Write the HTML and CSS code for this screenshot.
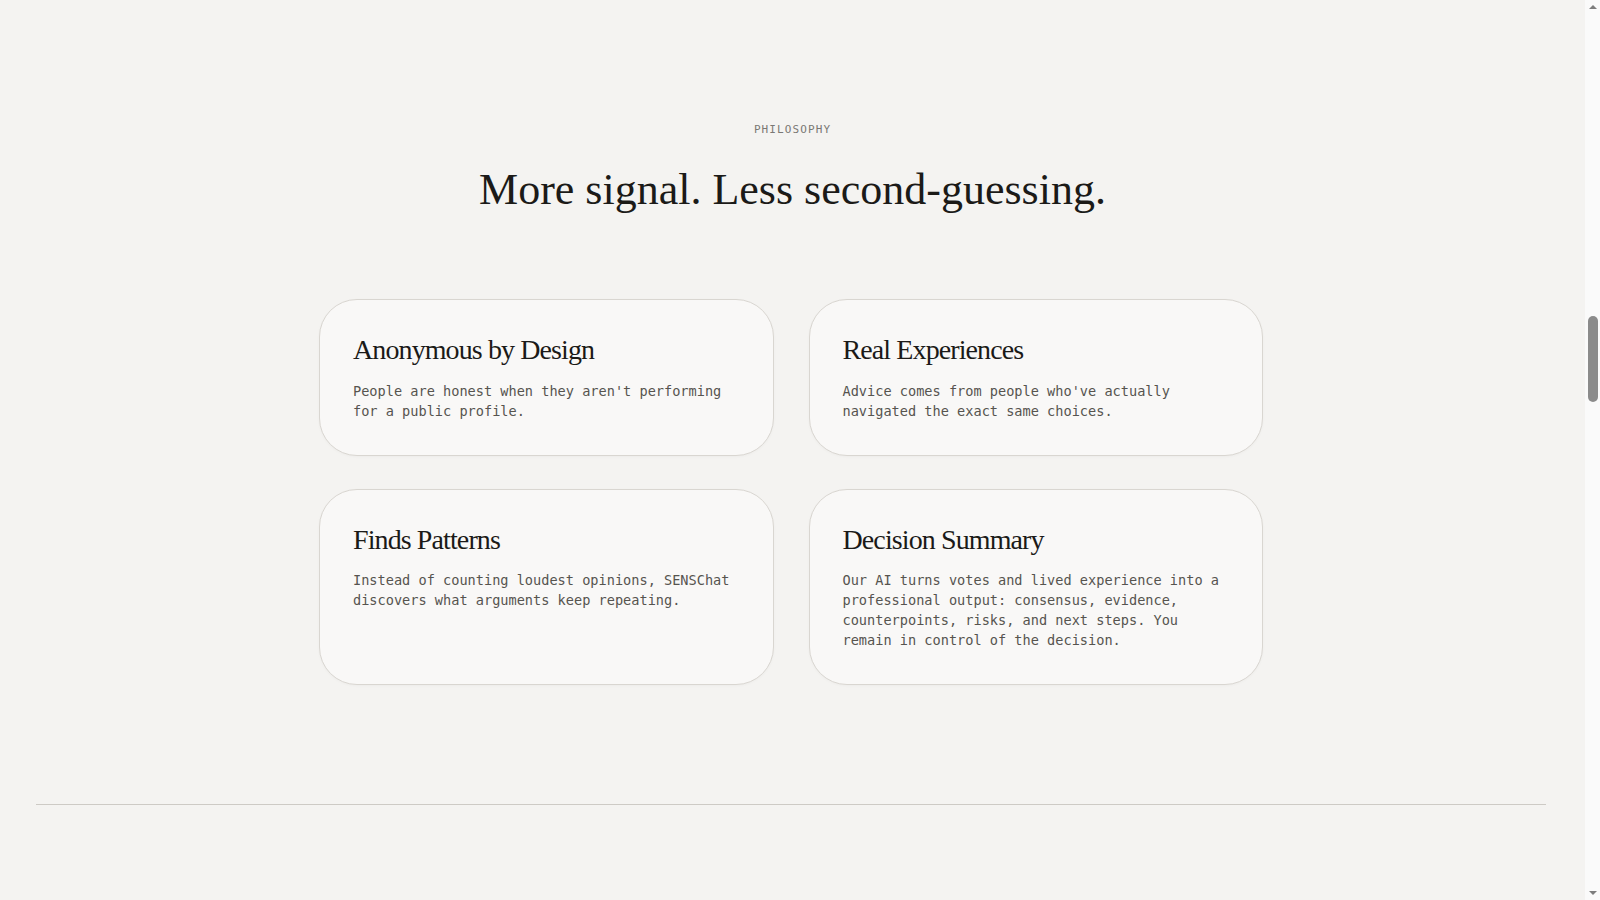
FILE: index.html
```html
<!DOCTYPE html>
<html lang="en">
<head>
    <meta charset="UTF-8">
    <meta name="viewport" content="width=device-width, initial-scale=1.0">
    <title>SENSChat — Philosophy</title>
    <link rel="stylesheet" href="styles.css">
</head>
<body>
    <div class="page">
        <main class="content">
            <section class="philosophy">
                <p class="eyebrow">PHILOSOPHY</p>
                <h2 class="section-title">More signal. Less second-guessing.</h2>

                <div class="card-grid">
                    <div class="card">
                        <h3>Anonymous by Design</h3>
                        <p>People are honest when they aren't performing for a public profile.</p>
                    </div>
                    <div class="card">
                        <h3>Real Experiences</h3>
                        <p>Advice comes from people who've actually navigated the exact same choices.</p>
                    </div>
                    <div class="card">
                        <h3>Finds Patterns</h3>
                        <p>Instead of counting loudest opinions, SENSChat discovers what arguments keep repeating.</p>
                    </div>
                    <div class="card">
                        <h3>Decision Summary</h3>
                        <p>Our AI turns votes and lived experience into a professional output: consensus, evidence, counterpoints, risks, and next steps. You remain in control of the decision.</p>
                    </div>
                </div>
            </section>

            <hr class="divider">
        </main>

        <!-- window scrollbar, page scrolled to the philosophy block -->
        <div class="scrollbar">
            <span class="arrow up"></span>
            <span class="thumb"></span>
            <span class="arrow down"></span>
        </div>
    </div>
</body>
</html>
```

FILE: styles.css
```css
body {
    margin: 0;
    background: #f4f3f1;
    color: #1b1a18;
    font-family: "Liberation Serif", Georgia, serif;
    overflow: hidden;
}

.page {
    display: flex;
    height: 100vh;
}

.content {
    flex: 1;
    min-width: 0;
}

.philosophy {
    padding: 122px 0 119px;
    text-align: center;
}

.eyebrow {
    margin: 0 0 25px;
    font-family: "DejaVu Sans Mono", "Liberation Mono", monospace;
    font-size: 11px;
    line-height: 1.5;
    letter-spacing: 0.1em;
    color: #7a7874;
}

.section-title {
    margin: 0 0 83px;
    font-size: 44px;
    font-weight: 400;
    line-height: 1.2;
    color: #1b1a18;
}

.card-grid {
    display: grid;
    grid-template-columns: repeat(2, 1fr);
    gap: 33px 35px;
    max-width: 944px;
    margin: 0 auto;
    padding-right: 3px;
    text-align: left;
}

.card {
    background: #f9f8f7;
    border: 1px solid #d9d6d1;
    border-radius: 38px;
    padding: 33px 33px 34px;
    box-shadow: 0 1px 3px rgba(0, 0, 0, 0.03);

    h3 {
        margin: 0 0 14px;
        font-size: 28px;
        font-weight: 400;
        line-height: 1.2;
        letter-spacing: -0.032em;
        color: #1b1a18;
    }

    p {
        margin: 0;
        font-family: "DejaVu Sans Mono", "Liberation Mono", monospace;
        font-size: 13.6px;
        line-height: 20px;
        color: #56544f;
    }
}

.divider {
    margin: 0 39px 0 36px;
    border: none;
    border-top: 1px solid #cdcac5;
}

/* scrollbar */
.scrollbar {
    width: 15px;
    flex-shrink: 0;
    background: #fafafa;
    display: flex;
    flex-direction: column;
    align-items: center;
}

.arrow {
    width: 0;
    height: 0;
    border-left: 4px solid transparent;
    border-right: 4px solid transparent;
}

.arrow.up {
    margin-top: 5px;
    border-bottom: 4px solid #7d7d7d;
}

.arrow.down {
    margin-top: auto;
    margin-bottom: 5px;
    border-top: 4px solid #7d7d7d;
}

.thumb {
    width: 10px;
    height: 86px;
    margin-top: 307px;
    border-radius: 5px;
    background: #8b8b8b;
}
```
